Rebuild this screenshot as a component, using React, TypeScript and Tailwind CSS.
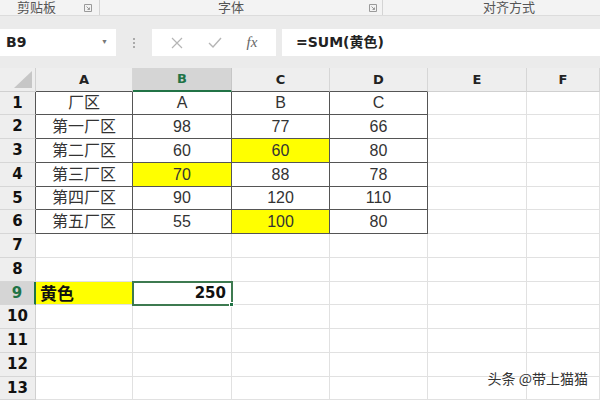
import React from 'react';

const cjk = { fontFamily: '"Liberation Sans", "Noto Sans CJK SC", sans-serif' };
const head = { fontFamily: '"DejaVu Sans", "Noto Sans CJK SC", sans-serif' };

type Cell = { v?: string; y?: boolean };

const cols = ['A', 'B', 'C', 'D', 'E', 'F'];
const rowHeights = [23, 24, 24, 24, 23, 24, 24, 24, 23, 24, 24, 24, 23];

const data: Cell[][] = [
  [{ v: '厂区' }, { v: 'A' }, { v: 'B' }, { v: 'C' }],
  [{ v: '第一厂区' }, { v: '98' }, { v: '77' }, { v: '66' }],
  [{ v: '第二厂区' }, { v: '60' }, { v: '60', y: true }, { v: '80' }],
  [{ v: '第三厂区' }, { v: '70', y: true }, { v: '88' }, { v: '78' }],
  [{ v: '第四厂区' }, { v: '90' }, { v: '120' }, { v: '110' }],
  [{ v: '第五厂区' }, { v: '55' }, { v: '100', y: true }, { v: '80' }],
];

const Launcher = () => (
  <svg width="8" height="8" viewBox="0 0 8 8" className="mb-[3px]">
    <path d="M0.5 0.5 H7.5 V7.5 H0.5 Z" fill="none" stroke="#9a9a9a" strokeWidth="1" />
    <path d="M2.5 2.5 L5.5 5.5 M5.5 3.5 V5.5 H3.5" fill="none" stroke="#9a9a9a" strokeWidth="1" />
  </svg>
);

const App: React.FC = () => {
  return (
    <div className="relative w-[600px] h-[400px] overflow-hidden bg-[#ebebeb]" style={cjk}>
      {/* ribbon group labels */}
      <div className="flex h-[16px] bg-[#f3f3f3] border-b border-[#dcdcdc] text-[13px] leading-[13px] text-[#555]">
        <div className="w-[100px] flex items-end pl-[17px] pr-[7px] border-r border-[#d4d4d4]">
          <span className="mb-[1px]">剪贴板</span>
          <span className="ml-auto"><Launcher /></span>
        </div>
        <div className="w-[283px] flex items-end pr-[5px] border-r border-[#d4d4d4]">
          <span className="ml-[118px] mb-[1px]">字体</span>
          <span className="ml-auto"><Launcher /></span>
        </div>
        <div className="flex-1 flex items-end">
          <span className="ml-[100px] mb-[1px]">对齐方式</span>
        </div>
      </div>

      {/* formula bar */}
      <div className="flex h-[27px] mt-[13px]">
        <div className="w-[116px] bg-white flex items-center pl-[6px] pr-[8px]">
          <span className="text-[14px] font-bold text-[#222]" style={head}>B9</span>
          <span className="ml-auto text-[7px] text-[#777]">▼</span>
        </div>
        <div className="w-[36px] flex flex-col items-center justify-center gap-[2px]">
          <span className="w-[2px] h-[2px] bg-[#aaa]" />
          <span className="w-[2px] h-[2px] bg-[#aaa]" />
          <span className="w-[2px] h-[2px] bg-[#aaa]" />
        </div>
        <div className="w-[124px] bg-white flex items-center justify-around px-[6px]">
          <svg width="12" height="12" viewBox="0 0 12 12">
            <path d="M1 1 L11 11 M11 1 L1 11" stroke="#b5b5b5" strokeWidth="1.2" />
          </svg>
          <svg width="14" height="12" viewBox="0 0 14 12">
            <path d="M1 6 L5 10 L13 1" fill="none" stroke="#b5b5b5" strokeWidth="1.4" />
          </svg>
          <span className="italic text-[15px] text-[#666]" style={{ fontFamily: '"Liberation Serif", serif' }}>fx</span>
        </div>
        <div className="flex-1 ml-[6px] bg-white flex items-center pl-[14px]">
          <span className="text-[14px] font-bold text-[#222]" style={head}>=SUM(黄色)</span>
        </div>
      </div>

      {/* sheet */}
      <div className="mt-[12px] grid grid-cols-[36px_97px_99px_98px_98px_99px_1fr] bg-white">
        {/* header row */}
        <div className="h-[24px] bg-[#eeeeee] border-r border-b border-[#d0d0d0] flex items-end justify-end p-[3px]">
          <svg width="18" height="17" viewBox="0 0 18 17">
            <path d="M18 0 L18 17 L0 17 Z" fill="#c6c6c6" />
          </svg>
        </div>
        {cols.map((c, i) => {
          const sel = c === 'B';
          const inTable = i < 4;
          return (
            <div
              key={c}
              className={
                'h-[24px] flex items-center justify-center text-[13px] font-bold border-r ' +
                (sel
                  ? 'bg-[#d5d5d5] text-[#217346] border-b-2 border-b-[#217346] border-r-[#c6c6c6]'
                  : inTable
                  ? 'bg-[#eeeeee] text-[#222] border-b border-b-[#555] border-r-[#d6d6d6]'
                  : 'bg-[#eeeeee] text-[#222] border-b border-b-[#d0d0d0] border-r-[#d6d6d6]')
              }
              style={head}
            >
              {c}
            </div>
          );
        })}

        {rowHeights.map((h, r) => {
          const rowNo = r + 1;
          const selRow = rowNo === 9;
          const tableRow = rowNo <= 6;
          return (
            <React.Fragment key={rowNo}>
              <div
                className={
                  'flex items-center justify-center text-[15px] font-bold border-b border-b-[#d6d6d6] ' +
                  (selRow
                    ? 'bg-[#d5d5d5] text-[#217346] border-r-2 border-r-[#217346]'
                    : tableRow
                    ? 'bg-[#eeeeee] text-[#111] border-r border-r-[#555]'
                    : 'bg-[#eeeeee] text-[#111] border-r border-r-[#d0d0d0]')
                }
                style={{ ...head, height: h }}
              >
                {rowNo}
              </div>
              {cols.map((c, ci) => {
                const cell: Cell | undefined = tableRow ? data[r][ci] : undefined;
                const dark = tableRow && ci < 4;
                let cls = 'relative flex items-center border-r border-b text-[16px] text-[#333] ';
                cls += dark ? 'border-[#555] justify-center ' : 'border-[#e1e1e1] ';
                if (rowNo === 6 && ci < 4) cls += 'border-b-[#555] ';
                if (cell?.y) cls += 'bg-[#ffff00] ';
                if (selRow && ci === 0) {
                  return (
                    <div key={c} className={cls + 'bg-[#ffff00] pl-[4px]'} style={{ height: h }}>
                      <span className="text-[17px] font-bold text-[#111]" style={{ fontFamily: '"Noto Sans CJK SC", sans-serif' }}>黄色</span>
                    </div>
                  );
                }
                if (selRow && ci === 1) {
                  return (
                    <div key={c} className={cls + 'justify-end pr-[5px] z-10 outline-2 outline-[#3d7a50] -outline-offset-1'} style={{ height: h }}>
                      <span className="text-[15px] font-bold text-[#111]" style={head}>250</span>
                      <span className="absolute -right-[3px] -bottom-[3px] w-[5px] h-[5px] bg-[#217346] border border-white" />
                    </div>
                  );
                }
                return (
                  <div key={c} className={cls} style={{ height: h }}>
                    {cell?.v}
                  </div>
                );
              })}
            </React.Fragment>
          );
        })}
      </div>

      <div className="absolute right-[12px] bottom-[11px] text-[14px] text-[#333]" style={{ fontFamily: '"Noto Sans CJK SC", sans-serif', textShadow: '0 0 2px #fff' }}>
        头条 @带上猫猫
      </div>
    </div>
  );
};

export default App;
